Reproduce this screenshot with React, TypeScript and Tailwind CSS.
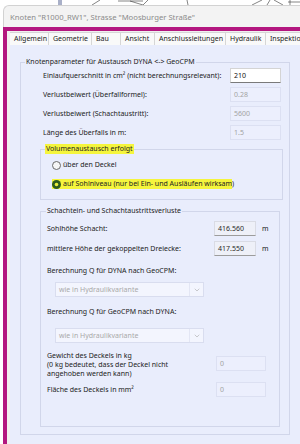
import { ChevronDown } from 'lucide-react'

const tabs = [
  { label: 'Allgemein', w: 'w-[39px]' },
  { label: 'Geometrie', w: 'w-[43px]' },
  { label: 'Bau', w: 'w-[29px]' },
  { label: 'Ansicht', w: 'w-[34px]' },
  { label: 'Anschlussleitungen', w: 'w-[71px]' },
  { label: 'Hydraulik', w: 'w-[40px]' },
  { label: 'Inspektion', w: 'w-[44px]' },
]

function Disabled({ value, className }: { value: string; className: string }) {
  return (
    <div className={`h-[15px] ${className} flex items-center border border-[#dce0f2] bg-[#eceffd] px-[3px] text-[#a3a3a3]`}>
      {value}
    </div>
  )
}

function ReadOnly({ value }: { value: string }) {
  return (
    <div className="h-[15px] w-[42px] flex items-center border border-[#d9dbe4] border-b-[#9c9c9c] bg-[#eef0f8] px-[3px] text-[#2a2a2a]">
      {value}
    </div>
  )
}

function Select() {
  return (
    <div className="ml-[8px] h-[15px] w-[149px] flex items-center border border-[#d9ddef] bg-[#f3f5fe] text-[#a9a9a9]">
      <span className="flex-1 pl-[3px]">wie in Hydraulikvariante</span>
      <span className="h-full w-[14px] flex items-center justify-center border-l border-[#e3e6f4]">
        <ChevronDown size={8} strokeWidth={1.5} className="text-[#9a9a9a]" />
      </span>
    </div>
  )
}

export default function App() {
  return (
    <div className="w-[300px] h-[444px] overflow-hidden bg-white font-['Noto_Sans',sans-serif] text-[7px] leading-[10px] text-[#222]">
      {/* Zeichnung hinter dem Fenster */}
      <svg width="300" height="5" className="block">
        <rect x="58" y="0" width="4" height="5" fill="#a9b0c8" />
        <line x1="100" y1="0" x2="92" y2="5" stroke="#333" strokeWidth="0.6" />
        <line x1="118" y1="1" x2="143" y2="1" stroke="#333" strokeWidth="0.6" />
        <line x1="130" y1="1" x2="143" y2="5" stroke="#333" strokeWidth="0.6" />
        <line x1="148" y1="0" x2="143" y2="5" stroke="#333" strokeWidth="0.6" />
        <line x1="187" y1="0" x2="188" y2="5" stroke="#333" strokeWidth="0.6" />
        <line x1="262" y1="0" x2="252" y2="5" stroke="#333" strokeWidth="0.6" />
        <line x1="270" y1="0" x2="267" y2="5" stroke="#333" strokeWidth="0.6" />
        <line x1="274" y1="0" x2="283" y2="5" stroke="#333" strokeWidth="0.6" />
        <line x1="288" y1="2" x2="300" y2="2" stroke="#333" strokeWidth="0.6" />
        <line x1="290" y1="0" x2="290" y2="5" stroke="#333" strokeWidth="0.6" />
      </svg>

      <div className="ml-[3px] flex flex-col">
        {/* Titelleiste */}
        <div className="h-[22px] flex items-center rounded-tl-[6px] border-l border-t border-[#d2d2d2] bg-[#f3f3f3] pl-[6px] text-[7.7px] text-[#8b8b8b]">
          Knoten "R1000_RW1", Strasse "Moosburger Straße"
        </div>

        <div className="border-l-[4px] border-t-[4px] border-[#b3177f] bg-[#f0f0f0] pl-[3px] pt-[1px]">
          {/* Reiter */}
          <div className="h-[13px] flex">
            {tabs.map((t) => (
              <div
                key={t.label}
                className={`${t.w} shrink-0 h-full flex items-center border-r border-t border-[#d6d6d6] bg-[#f9f9f9] pl-[4px] text-[#1a1a1a] whitespace-nowrap overflow-hidden`}
              >
                {t.label}
              </div>
            ))}
          </div>

          {/* Seite */}
          <div className="h-[399px] bg-[#e9edfc] pl-[10px] pt-[12px]">
            <fieldset className="w-[270px] border border-[#d1d6ea] pb-[7px]">
              <legend className="ml-[4px] px-[1px] leading-[10px]">Knotenparameter für Austausch DYNA &lt;-&gt; GeoCPM</legend>

              <div className="mt-[1px] flex flex-col gap-[4px] pl-[22px] pr-[8px]">
                <div className="h-[15px] flex items-center justify-between">
                  <span>Einlaufquerschnitt in cm² (nicht berechnungsrelevant):</span>
                  <div className="h-[15px] w-[51px] flex items-center border border-[#d4d4d4] border-b-[#7a7a7a] bg-white px-[3px] text-[#111]">210</div>
                </div>
                <div className="h-[15px] flex items-center justify-between">
                  <span>Verlustbeiwert (Überfallformel):</span>
                  <Disabled value="0.28" className="w-[51px]" />
                </div>
                <div className="h-[15px] flex items-center justify-between">
                  <span>Verlustbeiwert (Schachtaustritt):</span>
                  <Disabled value="5600" className="w-[51px]" />
                </div>
                <div className="h-[15px] flex items-center justify-between">
                  <span>Länge des Überfalls in m:</span>
                  <Disabled value="1.5" className="w-[51px]" />
                </div>
              </div>

              <fieldset className="ml-[19px] mr-[6px] mt-[4px] border border-[#d1d6ea] pb-[10px]">
                <legend className="ml-[4px] px-[1px] bg-[#f5f53d] leading-[10px]">Volumenaustausch erfolgt</legend>
                <div className="mt-[6px] pl-[11px] flex flex-col gap-[9px]">
                  <div className="h-[10px] flex items-center gap-[2px]">
                    <span className="h-[9px] w-[9px] rounded-full border border-[#6a6a6a] bg-[#f6f6f6]" />
                    <span>über den Deckel</span>
                  </div>
                  <div className="h-[10px] flex items-center">
                    <span className="h-[10px] flex items-center gap-[2px] bg-[#f5f53d]">
                      <svg width="9" height="9" viewBox="0 0 9 9">
                        <circle cx="4.5" cy="4.5" r="4.5" fill="#2f5b1d" />
                        <circle cx="4.5" cy="4.5" r="1.8" fill="#e9ec3c" />
                      </svg>
                      <span>auf Sohlniveau (nur bei Ein- und Ausläufen wirksam</span>
                    </span>
                    <span>)</span>
                  </div>
                </div>
              </fieldset>

              <fieldset className="ml-[19px] mr-[9px] mt-[6px] border border-[#d1d6ea] pb-[29px]">
                <legend className="ml-[5px] px-[1px] leading-[10px]">Schachtein- und Schachtaustrittsverluste</legend>
                <div className="pl-[6px] flex flex-col">
                  <div className="mt-[5px] h-[15px] flex items-center">
                    <span className="flex-1">Sohlhöhe Schacht:</span>
                    <ReadOnly value="416.560" />
                    <span className="w-[23px] pl-[6px]">m</span>
                  </div>
                  <div className="mt-[5px] h-[15px] flex items-center">
                    <span className="flex-1">mittlere Höhe der gekoppelten Dreiecke:</span>
                    <ReadOnly value="417.550" />
                    <span className="w-[23px] pl-[6px]">m</span>
                  </div>

                  <div className="mt-[10px] leading-[9px]">Berechnung Q für DYNA nach GeoCPM:</div>
                  <div className="mt-[7px]">
                    <Select />
                  </div>

                  <div className="mt-[10px] leading-[9px]">Berechnung Q für GeoCPM nach DYNA:</div>
                  <div className="mt-[12px]">
                    <Select />
                  </div>

                  <div className="mt-[8px] flex pr-[13px]">
                    <div className="flex-1 leading-[9px] whitespace-nowrap">
                      Gewicht des Deckels in kg
                      <br />
                      (0 kg bedeutet, dass der Deckel nicht
                      <br />
                      angehoben werden kann)
                    </div>
                    <div className="mt-[5px]">
                      <Disabled value="0" className="w-[50px]" />
                    </div>
                  </div>
                  <div className="mt-[4px] h-[15px] flex items-center pr-[13px]">
                    <span className="flex-1">Fläche des Deckels in mm²</span>
                    <Disabled value="0" className="w-[50px]" />
                  </div>
                </div>
              </fieldset>
            </fieldset>
          </div>
        </div>
      </div>
    </div>
  )
}
